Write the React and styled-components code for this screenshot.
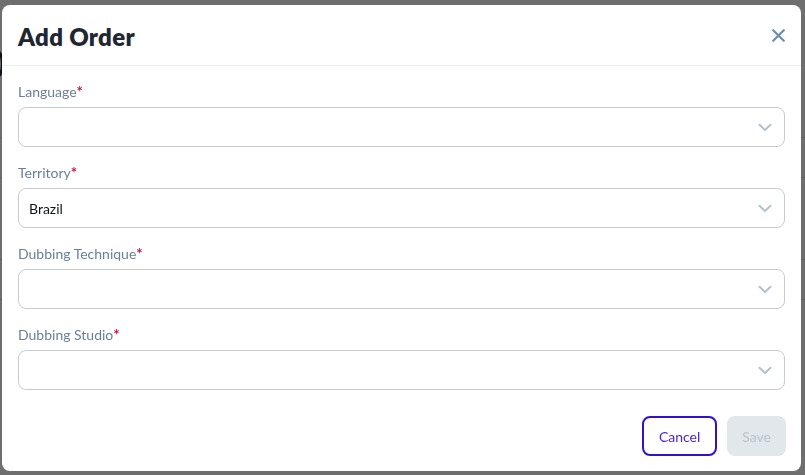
import styled, { createGlobalStyle } from "styled-components";

const GlobalStyle = createGlobalStyle`
  * {
    box-sizing: border-box;
  }
  body {
    margin: 0;
    font-family: Lato, "Open Sans", sans-serif;
    background: #ffffff;
  }
`;

const Page = styled.div`
  width: 805px;
  height: 475px;
  overflow: hidden;
  padding: 50px 0 0 0;
`;

const PageMark = styled.div`
  width: 14px;
  height: 28px;
  margin-left: -10px;
  border: 3px solid #1f2733;
  border-radius: 50%;
`;

const PageRow = styled.div`
  height: 40px;
  border-bottom: 1px solid #d6dbe0;
  margin-top: ${(p) => p.$top || 0}px;
`;

const Overlay = styled.div`
  position: fixed;
  inset: 0;
  background: rgba(0, 0, 0, 0.57);
  display: flex;
  padding: 5px 4px 4px 2px;
`;

const Modal = styled.div`
  flex: 1;
  background: #ffffff;
  border-radius: 8px;
  display: flex;
  flex-direction: column;
`;

const Header = styled.div`
  height: 61px;
  display: flex;
  align-items: center;
  justify-content: space-between;
  padding: 0 16px;
  border-bottom: 1px solid #eceff2;
`;

const Title = styled.h2`
  margin: 2px 0 0 0;
  font-size: 24px;
  font-weight: 800;
  letter-spacing: 0.3px;
  color: #1f2733;
`;

const CloseButton = styled.button`
  border: none;
  background: none;
  padding: 0;
  width: 14px;
  height: 14px;
  display: flex;
  align-items: center;
  justify-content: center;
  cursor: pointer;
`;

const Body = styled.div`
  padding: 16px;
  display: flex;
  flex-direction: column;
  gap: 16px;
`;

const Field = styled.div`
  display: flex;
  flex-direction: column;
  gap: 5px;
`;

const Label = styled.label`
  display: block;
  height: 20px;
  font-size: 14px;
  line-height: 20px;
  color: #6b7f99;
`;

const Required = styled.span`
  color: #cf1048;
  font-size: 15px;
  line-height: 14px;
  font-weight: 700;
`;

const SelectBox = styled.div`
  height: 40px;
  border: 1px solid #c9cbcd;
  border-radius: 8px;
  display: flex;
  align-items: center;
  justify-content: space-between;
  padding: 0 12px 0 10px;
  font-size: 14px;
  color: #111418;
`;

const Footer = styled.div`
  display: flex;
  justify-content: flex-end;
  gap: 10px;
  padding: 10px 15px 0 16px;
`;

const Button = styled.button`
  height: 40px;
  padding: 0 15px;
  border-radius: 8px;
  font-family: Lato, sans-serif;
  font-size: 14px;
  border: ${(p) => (p.$primary ? "none" : "2px solid #3411c9")};
  background: ${(p) => (p.$primary ? "#e2e7eb" : "#ffffff")};
  color: ${(p) => (p.$primary ? "#b8c3cd" : "#4a1fc9")};
`;

const Chevron = () => (
  <svg width="14" height="9" viewBox="0 0 14 9" fill="none">
    <path
      d="M1.5 1.8L7 7L12.5 1.8"
      stroke="#b3c2cf"
      strokeWidth="2"
      strokeLinecap="round"
      strokeLinejoin="round"
    />
  </svg>
);

const CloseIcon = () => (
  <svg width="13" height="13" viewBox="0 0 13 13" fill="none">
    <path
      d="M1.2 1.2L11.8 11.8M11.8 1.2L1.2 11.8"
      stroke="#6d8dae"
      strokeWidth="2.2"
      strokeLinecap="round"
    />
  </svg>
);

const fields = [
  { label: "Language", value: "" },
  { label: "Territory", value: "Brazil" },
  { label: "Dubbing Technique", value: "" },
  { label: "Dubbing Studio", value: "" },
];

const App = () => {
  return (
    <>
      <GlobalStyle />
      <Page>
        <PageMark />
        <PageRow $top={20} />
        <PageRow $top={0} />
        <PageRow $top={42} />
        <PageRow $top={0} />
      </Page>
      <Overlay>
        <Modal>
          <Header>
            <Title>Add Order</Title>
            <CloseButton>
              <CloseIcon />
            </CloseButton>
          </Header>
          <Body>
            {fields.map((f) => (
              <Field key={f.label}>
                <Label>
                  {f.label}
                  <Required>*</Required>
                </Label>
                <SelectBox>
                  <span>{f.value}</span>
                  <Chevron />
                </SelectBox>
              </Field>
            ))}
          </Body>
          <Footer>
            <Button>Cancel</Button>
            <Button $primary>Save</Button>
          </Footer>
        </Modal>
      </Overlay>
    </>
  );
};

export default App;
